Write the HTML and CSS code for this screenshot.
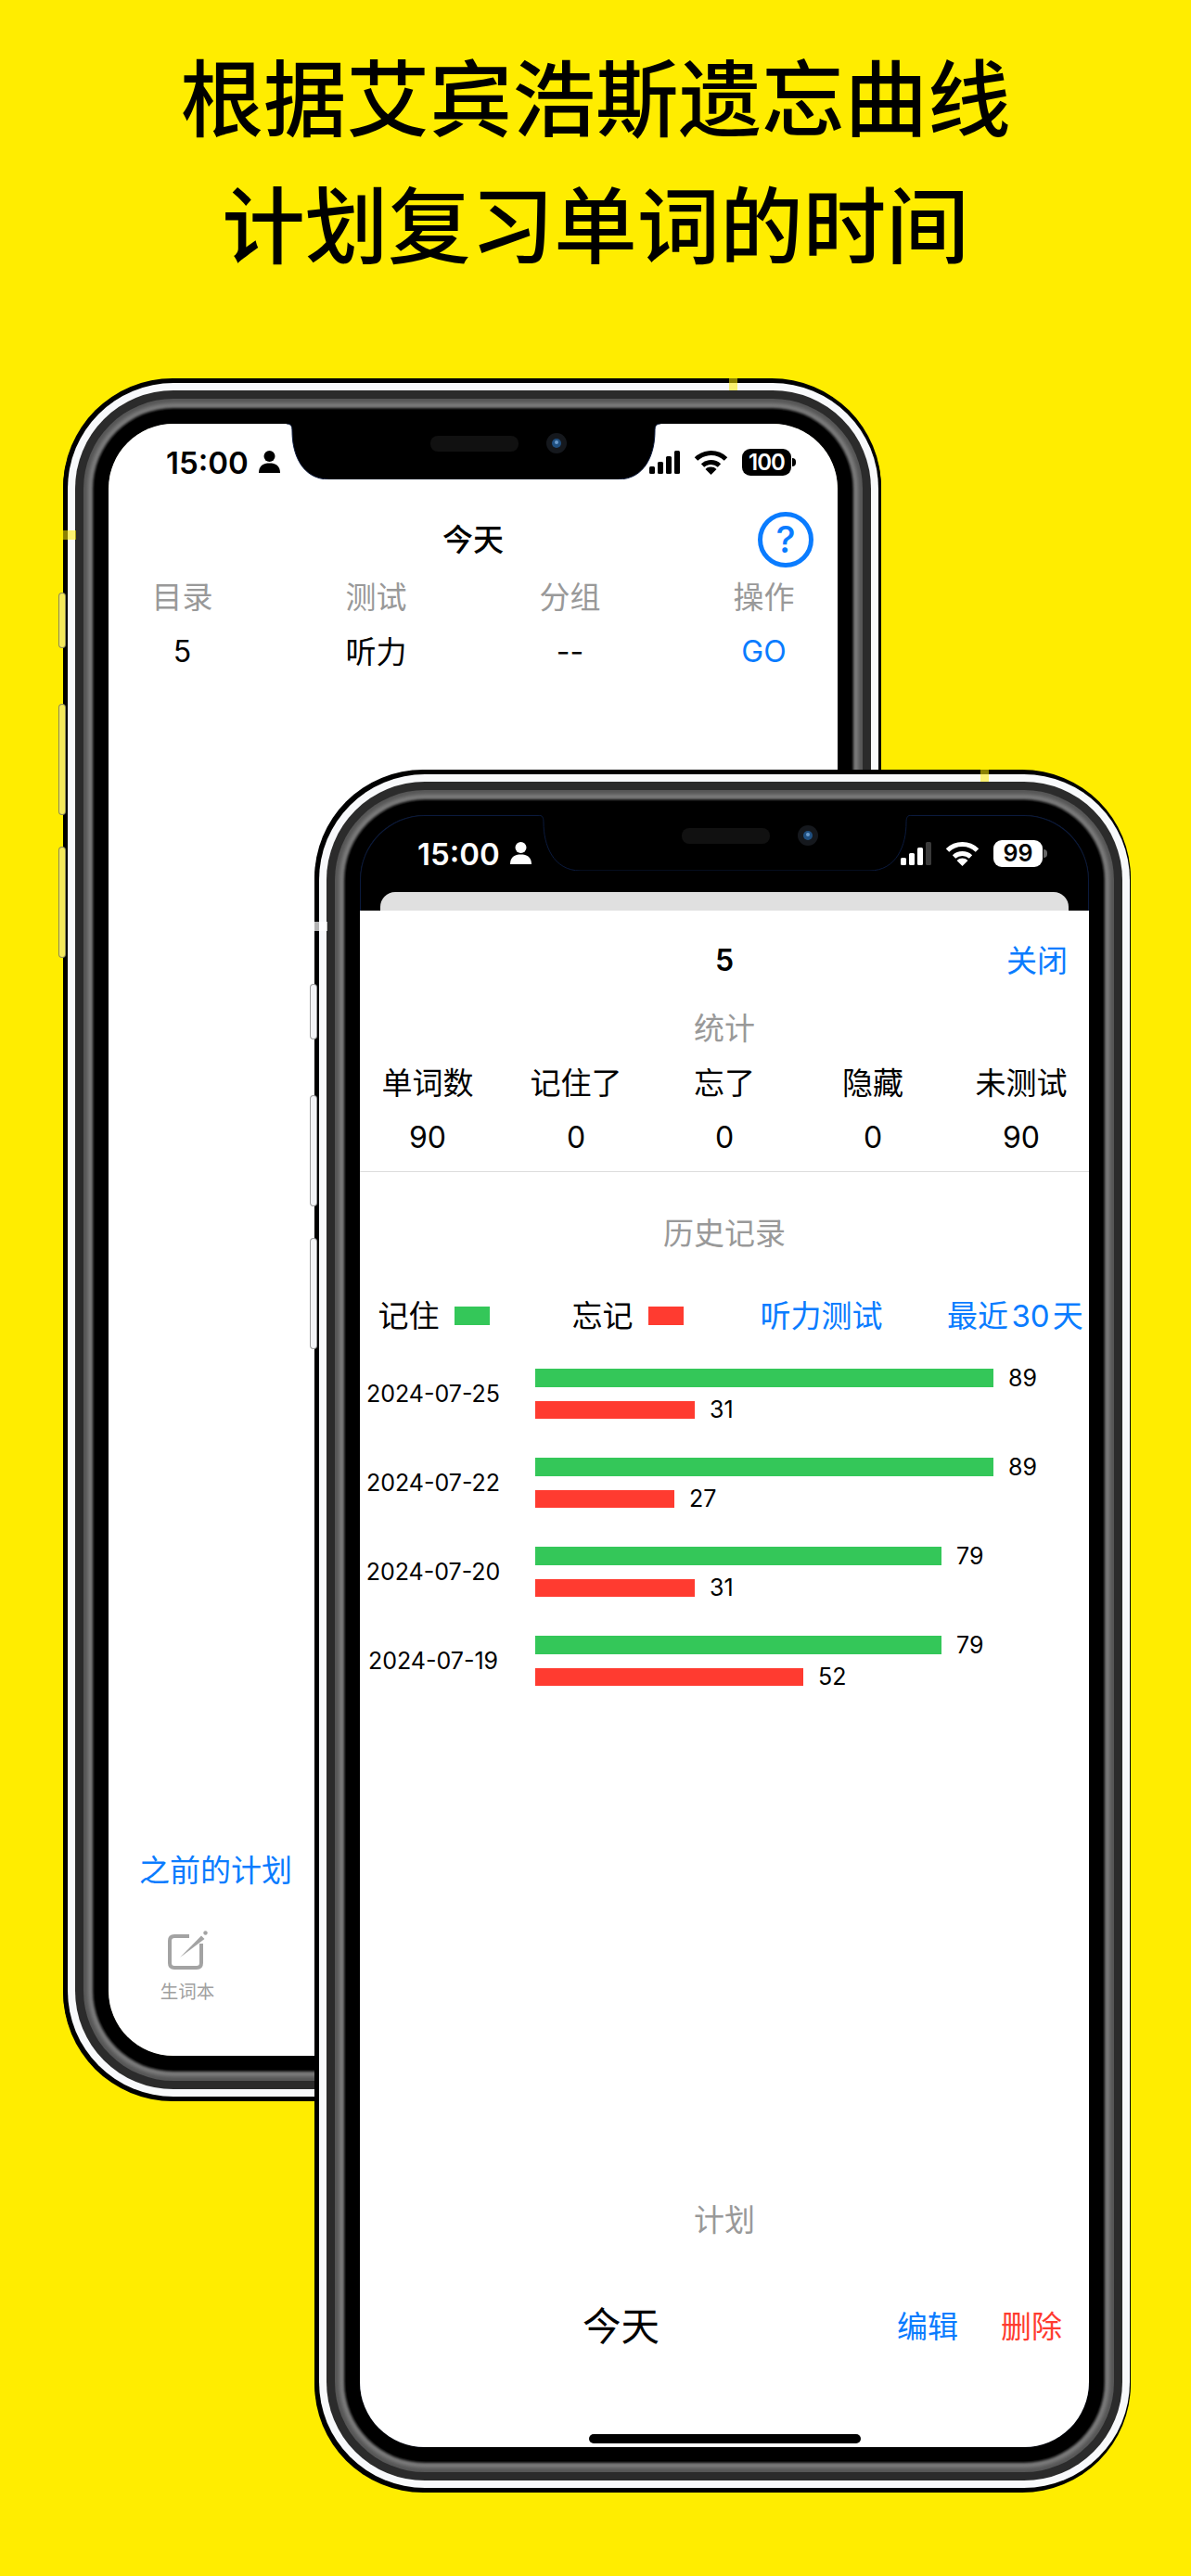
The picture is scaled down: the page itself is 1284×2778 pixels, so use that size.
FILE: index.html
```html
<!DOCTYPE html>
<html lang="zh-CN">
<head>
  <meta charset="UTF-8" />
  <meta name="viewport" content="width=device-width, initial-scale=1.0"/>
  <title>艾宾浩斯复习计划</title>
  <link rel="stylesheet" href="styles.css">
</head>
<body>
  <h1 class="headline">根据艾宾浩斯遗忘曲线<br>计划复习单词的时间</h1>

  <!-- back phone: today's plan list -->
  <div class="phone phone-back">
    <span class="band-mark band-top"></span>
    <span class="band-mark band-left"></span>
    <span class="side-btn side-1"></span>
    <span class="side-btn side-2"></span>
    <span class="side-btn side-3"></span>

    <svg class="notch" viewBox="0 0 403 60">
      <path class="notch-edge" d="M0 0C5 0 6 3 6 8C6 32 16 60 46 60H357C387 60 397 32 397 8C397 3 398 0 403 0"/>
      <rect x="155" y="13" width="95" height="17" rx="8" fill="#111"/>
      <circle cx="291" cy="21" r="11" fill="#15181d"/>
      <circle cx="291" cy="21" r="5" fill="#1f4f80"/>
      <circle cx="291" cy="20" r="2" fill="#6a9acb"/>
    </svg>

    <div class="screen">
      <div class="status-bar">
        <div class="status-left">
          <span class="clock">15:00</span>
          <svg class="person" viewBox="0 0 23 24"><circle cx="11.5" cy="6" r="6"/><path d="M0 24C0 16 5 13.5 11.5 13.5S23 16 23 24Z"/></svg>
        </div>
        <div class="status-right">
          <svg class="signal" viewBox="0 0 33 25"><rect x="0" y="17" width="6" height="8" rx="1.5"/><rect x="9" y="12" width="6" height="13" rx="1.5"/><rect x="18" y="6" width="6" height="19" rx="1.5"/><rect x="27" y="0" width="6" height="25" rx="1.5"/></svg>
          <svg class="wifi" viewBox="0 0 37 27"><path class="wifi-arc" d="M2.5 10A23 23 0 0 1 34.5 10"/><path class="wifi-arc" d="M9.5 17A13.5 13.5 0 0 1 27.5 17"/><path d="M18.5 27L12.5 21A8.5 8.5 0 0 1 24.5 21Z"/></svg>
          <div class="battery"><span>100</span></div>
        </div>
      </div>

      <div class="nav-row">
        <span></span>
        <span class="nav-title">今天</span>
        <span class="help-btn">?</span>
      </div>

      <div class="plan-table">
        <span class="muted">目录</span>
        <span class="muted">测试</span>
        <span class="muted">分组</span>
        <span class="muted">操作</span>
        <span class="num">5</span>
        <span>听力</span>
        <span class="num">--</span>
        <span class="link num">GO</span>
      </div>

      <div class="back-foot">
        <span class="link">之前的计划</span>
        <div class="tab-item">
          <svg class="tab-icon" viewBox="0 0 44 42">
            <path d="M24 6H8Q3 6 3 11V35Q3 40 8 40H32Q37 40 37 35V14" fill="none" stroke="#a3a3a3" stroke-width="4"/>
            <path d="M14 29L37 5.5L40.5 9Z" fill="#a3a3a3"/>
            <circle cx="41.5" cy="2.5" r="2.2" fill="#a3a3a3"/>
          </svg>
          <span>生词本</span>
        </div>
      </div>
    </div>
  </div>

  <!-- front phone: detail sheet -->
  <div class="phone phone-front">
    <span class="band-mark band-top"></span>
    <span class="band-mark band-left"></span>
    <span class="side-btn side-1"></span>
    <span class="side-btn side-2"></span>
    <span class="side-btn side-3"></span>

    <svg class="notch" viewBox="0 0 403 60">
      <path class="notch-edge" d="M0 0C5 0 6 3 6 8C6 32 16 60 46 60H357C387 60 397 32 397 8C397 3 398 0 403 0"/>
      <rect x="155" y="14" width="95" height="17" rx="8" fill="#111"/>
      <circle cx="291" cy="22" r="11" fill="#15181d"/>
      <circle cx="291" cy="22" r="5" fill="#1f4f80"/>
      <circle cx="291" cy="21" r="2" fill="#6a9acb"/>
    </svg>

    <div class="screen screen-dark">
      <div class="status-bar">
        <div class="status-left">
          <span class="clock">15:00</span>
          <svg class="person" viewBox="0 0 23 24"><circle cx="11.5" cy="6" r="6"/><path d="M0 24C0 16 5 13.5 11.5 13.5S23 16 23 24Z"/></svg>
        </div>
        <div class="status-right">
          <svg class="signal" viewBox="0 0 33 25"><rect x="0" y="17" width="6" height="8" rx="1.5"/><rect x="9" y="12" width="6" height="13" rx="1.5"/><rect x="18" y="6" width="6" height="19" rx="1.5"/><rect x="27" y="0" width="6" height="25" rx="1.5" fill="#3a3a3a"/></svg>
          <svg class="wifi" viewBox="0 0 37 27"><path class="wifi-arc" d="M2.5 10A23 23 0 0 1 34.5 10"/><path class="wifi-arc" d="M9.5 17A13.5 13.5 0 0 1 27.5 17"/><path d="M18.5 27L12.5 21A8.5 8.5 0 0 1 24.5 21Z"/></svg>
          <div class="battery"><span>99</span></div>
        </div>
      </div>

      <div class="sheet-peek"></div>

      <div class="sheet">
        <div class="sheet-head">
          <span></span>
          <span class="sheet-title num">5</span>
          <span class="link close-link">关闭</span>
        </div>

        <div class="section-title stats-title">统计</div>
        <div class="stats">
          <span>单词数</span><span>记住了</span><span>忘了</span><span>隐藏</span><span>未测试</span>
          <span class="num">90</span><span class="num">0</span><span class="num">0</span><span class="num">0</span><span class="num">90</span>
        </div>

        <div class="section-title history-title">历史记录</div>
        <div class="legend">
          <div class="legend-item">记住<i class="swatch swatch-green"></i></div>
          <div class="legend-item">忘记<i class="swatch swatch-red"></i></div>
          <div class="legend-item link">听力测试</div>
          <div class="legend-item link range">最近 30 天</div>
        </div>

        <div class="chart">
          <div class="chart-row">
            <span class="chart-date">2024-07-25</span>
            <div class="chart-bars">
              <div class="bar-line"><i class="bar bar-green" style="width:494px"></i>89</div>
              <div class="bar-line"><i class="bar bar-red" style="width:172px"></i>31</div>
            </div>
          </div>
          <div class="chart-row">
            <span class="chart-date">2024-07-22</span>
            <div class="chart-bars">
              <div class="bar-line"><i class="bar bar-green" style="width:494px"></i>89</div>
              <div class="bar-line"><i class="bar bar-red" style="width:150px"></i>27</div>
            </div>
          </div>
          <div class="chart-row">
            <span class="chart-date">2024-07-20</span>
            <div class="chart-bars">
              <div class="bar-line"><i class="bar bar-green" style="width:438px"></i>79</div>
              <div class="bar-line"><i class="bar bar-red" style="width:172px"></i>31</div>
            </div>
          </div>
          <div class="chart-row">
            <span class="chart-date">2024-07-19</span>
            <div class="chart-bars">
              <div class="bar-line"><i class="bar bar-green" style="width:438px"></i>79</div>
              <div class="bar-line"><i class="bar bar-red" style="width:289px"></i>52</div>
            </div>
          </div>
        </div>

        <div class="section-title plan-title">计划</div>
        <div class="plan-row">
          <span class="plan-day">今天</span>
          <div class="plan-actions">
            <span class="link">编辑</span>
            <span class="danger">删除</span>
          </div>
        </div>

        <div class="home-bar"></div>
      </div>
    </div>
  </div>
</body>
</html>
```

FILE: styles.css
```css
* {
  box-sizing: border-box;
}

body {
  margin: 0;
  width: 1284px;
  height: 2778px;
  overflow: hidden;
  position: relative;
  background-color: #ffed00;
  color: #000;
  font-family: Inter, "Noto Sans CJK SC", sans-serif;
  font-size: 33px;
  line-height: 44px;
}

.num {
  font-size: 32px;
}

.headline {
  margin: 0;
  padding-top: 39px;
  font-size: 89.5px;
  font-weight: 500;
  line-height: 137px;
  text-align: center;
}

/* phone frame: the rings are stacked shadows around the screen */
.phone {
  --rings:
    0 0 0 15px #000,
    0 0 3px 17px #000,
    0 0 4px 22px #828282,
    0 0 0 27px #555,
    0 0 0 36px #2b2b2b,
    0 0 0 44px #f8f9fb;
  position: absolute;
  width: 786px;
  height: 1760px;
  border-radius: 70px;
}

.phone-back {
  left: 117px;
  top: 457px;
  box-shadow: var(--rings), -1px -1px 0 48px #000, -1px 1px 0 48px #000;
}

.phone-front {
  left: 388px;
  top: 879px;
  box-shadow: var(--rings), -2px -2px 0 47px #000, -2px 2px 0 47px #000;
}

.screen {
  position: relative;
  height: 100%;
  display: flex;
  flex-direction: column;
  border-radius: 70px;
  background-color: white;
  overflow: hidden;
}

.screen-dark {
  background-color: #000;
  color: #fff;
  box-shadow: inset 0 0 0 1px #0b1a3d;
}

.band-mark {
  position: absolute;
  z-index: 2;
  background: rgba(255, 237, 0, 0.55);
}

.band-top {
  left: 669px;
  top: -50px;
  width: 9px;
  height: 14px;
}

.band-left {
  left: -49px;
  top: 115px;
  width: 14px;
  height: 10px;
}

.phone-front .band-left {
  background: rgba(255, 255, 255, 0.7);
}

.side-btn {
  position: absolute;
  left: -53px;
  width: 6px;
  border-radius: 3px;
  background: #f4e95c;
  box-shadow: 0 0 0 1px #8d8a55;
}

.phone-front .side-btn {
  background: #f3f4f7;
  box-shadow: 0 0 0 1px #999;
}

.side-1 { top: 183px; height: 58px; }
.side-2 { top: 303px; height: 118px; }
.side-3 { top: 457px; height: 118px; }

.notch {
  position: absolute;
  z-index: 3;
  left: 50%;
  top: 0;
  width: 403px;
  height: 60px;
  margin-left: -201.5px;
}

.notch-edge {
  fill: #000;
  stroke: #0b1a3d;
  stroke-width: 1;
}

/* status bar */
.status-bar {
  flex: none;
  display: flex;
  justify-content: space-between;
  align-items: center;
  height: 82px;
  padding: 0 45px 0 62px;
}

.status-left,
.status-right {
  display: flex;
  align-items: center;
}

.clock {
  padding-top: 2px;
  font-size: 33px;
  font-weight: 600;
}

.person {
  width: 23px;
  height: 24px;
  margin-left: 11px;
  fill: currentColor;
}

.signal {
  width: 33px;
  height: 25px;
  fill: currentColor;
}

.wifi {
  width: 37px;
  height: 27px;
  margin-left: 15px;
  fill: currentColor;
}

.wifi-arc {
  fill: none;
  stroke: currentColor;
  stroke-width: 5;
}

.battery {
  position: relative;
  width: 53px;
  height: 29px;
  margin-left: 15px;
  margin-right: 5px;
  border-radius: 9px;
  background: #000;
  color: #fff;
  font-size: 24px;
  font-weight: 600;
  letter-spacing: -1px;
  line-height: 29px;
  text-align: center;
}

.battery::after {
  content: "";
  position: absolute;
  right: -5px;
  top: 10px;
  width: 4px;
  height: 9px;
  border-radius: 0 5px 5px 0;
  background: #000;
}

.screen-dark .battery {
  background: #fff;
  color: #000;
  font-size: 25px;
  letter-spacing: 0;
}

.screen-dark .battery::after {
  background: #666;
}

/* back phone */
.nav-row {
  flex: none;
  display: grid;
  grid-template-columns: 1fr auto 1fr;
  align-items: center;
  height: 60px;
  margin-top: 13px;
  padding: 0 26px;
}

.nav-title {
  font-weight: 500;
}

.help-btn {
  justify-self: end;
  width: 60px;
  height: 60px;
  border: 5px solid #0a7cff;
  border-radius: 50%;
  color: #0a7cff;
  font-size: 40px;
  font-weight: 500;
  line-height: 50px;
  text-align: center;
}

.plan-table {
  flex: none;
  display: grid;
  grid-template-columns: repeat(4, 209px);
  grid-auto-rows: 59px;
  justify-content: center;
  align-items: center;
  margin-top: 2px;
  text-align: center;
}

.muted {
  color: #999;
}

.link {
  color: #0a7cff;
}

.danger {
  color: #ff3b30;
}

.back-foot {
  margin-top: auto;
  padding: 0 0 57px 33px;
  line-height: 40px;
}

.tab-item {
  display: flex;
  flex-direction: column;
  align-items: center;
  width: 104px;
  margin: 45px 0 0 0;
  color: #a0a0a0;
  font-size: 19.5px;
  line-height: 24px;
}

.tab-icon {
  width: 44px;
  height: 42px;
  margin-bottom: 12px;
}

/* front phone */
.sheet-peek {
  flex: none;
  height: 20px;
  margin: 1px 22px 0;
  border-radius: 16px 16px 0 0;
  background: #e0e0e0;
}

.sheet {
  position: relative;
  flex: 1;
  display: flex;
  flex-direction: column;
  padding: 30px 0 100px;
  background: white;
  color: #000;
}

.sheet-head {
  flex: none;
  display: grid;
  grid-template-columns: 1fr auto 1fr;
  align-items: center;
  height: 48px;
  padding: 0 23px;
}

.sheet-title {
  font-weight: 600;
}

.close-link {
  justify-self: end;
}

.section-title {
  flex: none;
  color: #999;
  text-align: center;
}

.stats-title {
  margin-top: 27px;
}

.stats {
  flex: none;
  display: grid;
  grid-template-columns: repeat(5, 160px);
  grid-auto-rows: 59px;
  justify-content: center;
  align-items: center;
  margin-top: 7px;
  padding-bottom: 7px;
  border-bottom: 1px solid #ddd;
  text-align: center;
}

.history-title {
  margin-top: 44px;
}

.legend {
  flex: none;
  display: grid;
  grid-template-columns: repeat(4, 209px);
  justify-content: center;
  height: 44px;
  margin-top: 45px;
}

.legend-item {
  display: flex;
  justify-content: center;
  align-items: center;
}

.range {
  word-spacing: -6px;
}

.swatch {
  width: 38px;
  height: 20px;
  margin-left: 16px;
}

.swatch-green,
.bar-green {
  background: #34c759;
}

.swatch-red,
.bar-red {
  background: #ff3b30;
}

.chart {
  flex: none;
  display: flex;
  flex-direction: column;
  gap: 42px;
  margin-top: 35px;
}

.chart-row {
  display: flex;
  align-items: center;
  font-size: 25px;
}

.chart-date {
  width: 158px;
  margin-right: 31px;
  text-align: center;
}

.chart-bars {
  display: flex;
  flex-direction: column;
  gap: 15px;
}

.bar-line {
  display: flex;
  align-items: center;
  height: 19.5px;
}

.bar {
  height: 100%;
  margin-right: 16px;
}

.plan-title {
  margin-top: auto;
}

.plan-row {
  flex: none;
  display: flex;
  align-items: center;
  height: 60px;
  margin-top: 63px;
  padding: 0 29px 0 240px;
}

.plan-day {
  font-size: 41.5px;
}

.plan-actions {
  display: flex;
  gap: 46px;
  margin-left: auto;
}

.home-bar {
  position: absolute;
  left: 247px;
  bottom: 4px;
  width: 293px;
  height: 10px;
  border-radius: 5px;
  background: #000;
}
```
